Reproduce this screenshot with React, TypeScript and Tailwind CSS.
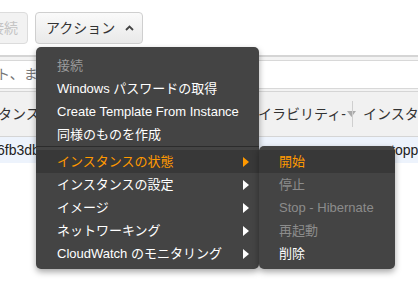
import React from "react";

const font = { fontFamily: '"Liberation Sans", "Noto Sans CJK JP", sans-serif' };

function Arrow({ active }: { active?: boolean }) {
  return (
    <svg width="6" height="10" viewBox="0 0 6 10" className="shrink-0">
      <path d="M0 0 L6 5 L0 10 Z" fill={active ? "#ff9900" : "#ffffff"} />
    </svg>
  );
}

const mainTop = [
  { label: "接続", disabled: true },
  { label: "Windows パスワードの取得" },
  { label: "Create Template From Instance" },
  { label: "同様のものを作成" },
];

const mainBottom = [
  { label: "インスタンスの状態", active: true },
  { label: "インスタンスの設定" },
  { label: "イメージ" },
  { label: "ネットワーキング" },
  { label: "CloudWatch のモニタリング" },
];

const sub = [
  { label: "開始", active: true },
  { label: "停止", disabled: true },
  { label: "Stop - Hibernate", disabled: true },
  { label: "再起動", disabled: true },
  { label: "削除" },
];

export default function App() {
  return (
    <div className="relative h-[296px] w-[418px] overflow-hidden bg-white text-[14px]" style={font}>
      {/* toolbar */}
      <div className="flex h-[55px] items-start gap-[7px] pt-[12px]">
        <div className="ml-[-12px] flex h-[32px] w-[40px] items-center justify-end rounded-[4px] border border-[#dcdcdc] bg-[#f2f2f2] pr-[9px] text-[#c4c4c4]">
          接続
        </div>
        <div className="flex h-[32px] w-[108px] items-center gap-[10px] rounded-[4px] border border-[#cfcfcf] bg-gradient-to-b from-[#fafafa] to-[#e9e9e9] pl-[10px] text-[#333]">
          <span>アクション</span>
          <svg width="9" height="6" viewBox="0 0 9 6">
            <path d="M1 5 L4.5 1.5 L8 5" fill="none" stroke="#444" strokeWidth="1.8" />
          </svg>
        </div>
      </div>

      {/* filter bar */}
      <div className="border-t-2 border-[#d5d5d5] bg-[#f3f3f3] pt-[3px] pb-[2px]">
        <div className="flex h-[29px] items-center whitespace-nowrap border-y border-[#d8d8d8] bg-white text-[#777]">
          <span className="ml-[-4px]">ト、または</span>
        </div>
      </div>

      {/* table header */}
      <div className="flex h-[46px] items-center whitespace-nowrap border-y border-[#d5d5d5] bg-[#f1f1f1] text-[#333]">
        <span className="ml-[-2px] w-[260px] shrink-0">タンス</span>
        <span className="flex w-[94px] shrink-0 items-center">
          イラビリティ-
          <svg width="9" height="6" viewBox="0 0 9 6" className="ml-[1px] shrink-0">
            <path d="M0 0 L9 0 L4.5 6 Z" fill="#aaa" />
          </svg>
        </span>
        <span className="h-[26px] w-px shrink-0 bg-[#cfcfcf]" />
        <span className="ml-[10px]">インスタ</span>
      </div>

      {/* row */}
      <div className="flex h-[26px] items-center whitespace-nowrap bg-[#edf3fc] text-[#222]">
        <span className="ml-[-3px] w-[368px] shrink-0">6fb3db2</span>
        <span className="h-[8px] w-[8px] shrink-0 rounded-full bg-[#d13212]" />
        <span className="ml-[11px]">stopped</span>
      </div>

      {/* main menu */}
      <div className="absolute left-[36px] top-[47px] w-[223px] rounded-[5px] bg-[#444444] pt-[7px] pb-[4px] text-[13px] shadow-[0_3px_6px_rgba(0,0,0,0.35)]">
        {mainTop.map((it) => (
          <div
            key={it.label}
            className={`flex h-[23px] items-center whitespace-nowrap pl-[21px] ${it.disabled ? "text-[#9a9a9a]" : "text-white"}`}
          >
            {it.label}
          </div>
        ))}
        <div className="h-[4px] border-t border-[#2c2c2c]" />
        {mainBottom.map((it) => (
          <div
            key={it.label}
            className={`flex h-[23px] items-center justify-between whitespace-nowrap pl-[21px] pr-[10px] ${
              it.active ? "bg-[#383838] text-[#ff9900]" : "text-white"
            }`}
          >
            <span>{it.label}</span>
            <Arrow active={it.active} />
          </div>
        ))}
      </div>

      {/* submenu */}
      <div className="absolute left-[259px] top-[146px] w-[136px] rounded-[5px] bg-[#444444] pt-[4px] pb-[4px] text-[13px] shadow-[0_3px_6px_rgba(0,0,0,0.35)]">
        {sub.map((it) => (
          <div
            key={it.label}
            className={`flex h-[23px] items-center whitespace-nowrap pl-[20px] ${
              it.active ? "bg-[#383838] text-[#ff9900]" : it.disabled ? "text-[#8c8c8c]" : "text-white"
            }`}
          >
            {it.label}
          </div>
        ))}
      </div>
    </div>
  );
}
